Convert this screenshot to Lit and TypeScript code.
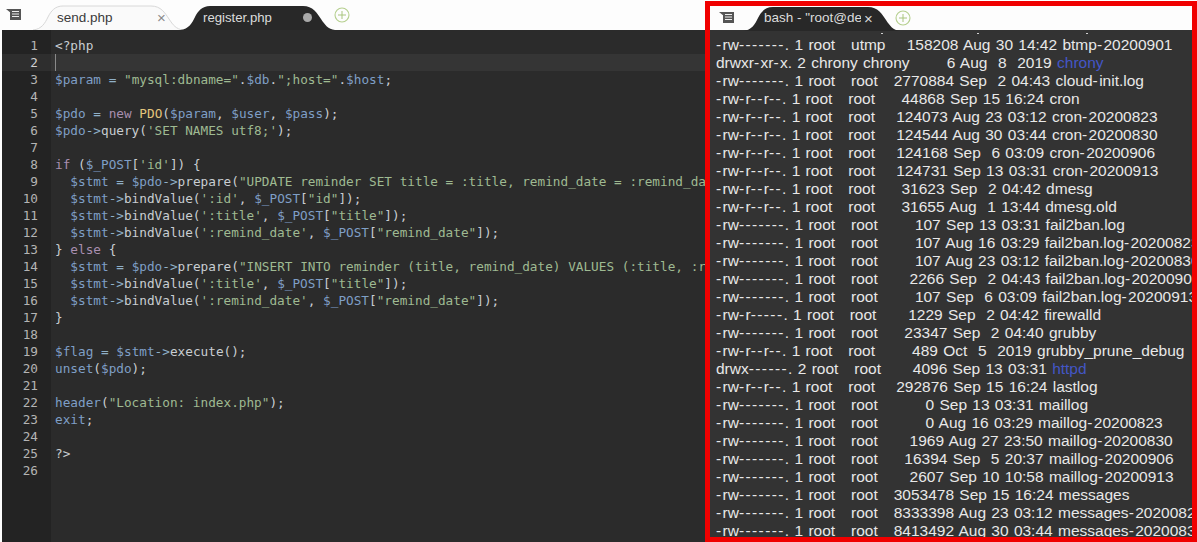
import { LitElement, html, css, svg } from "lit";
import { customElement } from "lit/decorators.js";

const CODE = [
  `<?php`,
  ``,
  `$param = "mysql:dbname=".$db.";host=".$host;`,
  ``,
  `$pdo = new PDO($param, $user, $pass);`,
  `$pdo->query('SET NAMES utf8;');`,
  ``,
  `if ($_POST['id']) {`,
  `  $stmt = $pdo->prepare("UPDATE reminder SET title = :title, remind_date = :remind_date WHERE id = :id");`,
  `  $stmt->bindValue(':id', $_POST["id"]);`,
  `  $stmt->bindValue(':title', $_POST["title"]);`,
  `  $stmt->bindValue(':remind_date', $_POST["remind_date"]);`,
  `} else {`,
  `  $stmt = $pdo->prepare("INSERT INTO reminder (title, remind_date) VALUES (:title, :remind_date)");`,
  `  $stmt->bindValue(':title', $_POST["title"]);`,
  `  $stmt->bindValue(':remind_date', $_POST["remind_date"]);`,
  `}`,
  ``,
  `$flag = $stmt->execute();`,
  `unset($pdo);`,
  ``,
  `header("Location: index.php");`,
  `exit;`,
  ``,
  `?>`,
  ``,
];

const TOKEN =
  /(\$\w+)|("[^"]*"|'[^']*')|\b(new|if|else)\b|\b(PDO)\b|\b(unset|header|exit)\b|(->|=)/g;

function highlight(line: string) {
  const out: unknown[] = [];
  let last = 0;
  for (const m of line.matchAll(TOKEN)) {
    const i = m.index ?? 0;
    if (i > last) out.push(line.slice(last, i));
    const cls = m[1] ? "var" : m[2] ? "str" : m[3] ? "kw" : m[4] ? "cls" : m[5] ? "fn" : "op";
    out.push(html`<span class=${cls}>${m[0]}</span>`);
    last = i + m[0].length;
  }
  if (last < line.length) out.push(line.slice(last));
  return out;
}

const TERM: [string, string?][] = [
  [`-rw-------. 1 root   utmp    158208 Aug 30 14:42 btmp-20200901`],
  [`drwxr-xr-x. 2 chrony chrony       6 Aug  8  2019 `, `chrony`],
  [`-rw-------. 1 root   root   2770884 Sep  2 04:43 cloud-init.log`],
  [`-rw-r--r--. 1 root   root     44868 Sep 15 16:24 cron`],
  [`-rw-r--r--. 1 root   root    124073 Aug 23 03:12 cron-20200823`],
  [`-rw-r--r--. 1 root   root    124544 Aug 30 03:44 cron-20200830`],
  [`-rw-r--r--. 1 root   root    124168 Sep  6 03:09 cron-20200906`],
  [`-rw-r--r--. 1 root   root    124731 Sep 13 03:31 cron-20200913`],
  [`-rw-r--r--. 1 root   root     31623 Sep  2 04:42 dmesg`],
  [`-rw-r--r--. 1 root   root     31655 Aug  1 13:44 dmesg.old`],
  [`-rw-------. 1 root   root       107 Sep 13 03:31 fail2ban.log`],
  [`-rw-------. 1 root   root       107 Aug 16 03:29 fail2ban.log-20200823`],
  [`-rw-------. 1 root   root       107 Aug 23 03:12 fail2ban.log-20200830`],
  [`-rw-------. 1 root   root      2266 Sep  2 04:43 fail2ban.log-20200906`],
  [`-rw-------. 1 root   root       107 Sep  6 03:09 fail2ban.log-20200913`],
  [`-rw-r-----. 1 root   root      1229 Sep  2 04:42 firewalld`],
  [`-rw-------. 1 root   root     23347 Sep  2 04:40 grubby`],
  [`-rw-r--r--. 1 root   root       489 Oct  5  2019 grubby_prune_debug`],
  [`drwx------. 2 root   root      4096 Sep 13 03:31 `, `httpd`],
  [`-rw-r--r--. 1 root   root    292876 Sep 15 16:24 lastlog`],
  [`-rw-------. 1 root   root         0 Sep 13 03:31 maillog`],
  [`-rw-------. 1 root   root         0 Aug 16 03:29 maillog-20200823`],
  [`-rw-------. 1 root   root      1969 Aug 27 23:50 maillog-20200830`],
  [`-rw-------. 1 root   root     16394 Sep  5 20:37 maillog-20200906`],
  [`-rw-------. 1 root   root      2607 Sep 10 10:58 maillog-20200913`],
  [`-rw-------. 1 root   root   3053478 Sep 15 16:24 messages`],
  [`-rw-------. 1 root   root   8333398 Aug 23 03:12 messages-20200823`],
  [`-rw-------. 1 root   root   8413492 Aug 30 03:44 messages-20200830`],
];

function termText(t: string) {
  return t.split(/(-+)/).map((p) => (p.startsWith("-") ? html`<span class="hy">${p}</span>` : p));
}

const listIcon = html`<svg class="list" width="16" height="13" viewBox="0 0 16 13">
  <path d="M0 1h15v11H4V4.2L0 1z" fill="#555" />
  <path d="M6 3.5h7M6 6h7M6 8.5h7" stroke="#eee" stroke-width="1" fill="none" />
</svg>`;

const plusIcon = html`<svg class="plus" width="16" height="16" viewBox="0 0 16 16">
  <circle cx="8" cy="8" r="7" fill="none" stroke="#b5cf8e" stroke-width="1.1" />
  <path d="M8 4v8M4 8h8" stroke="#a9c57f" stroke-width="1" />
</svg>`;

function tabShape(w: number, active: boolean) {
  const d = `M0 25 C9 24 12 18 15 12 C18 6 22 1 30 1 L${w - 32} 1 C${w - 22} 1 ${w - 18} 8 ${w - 14} 14 C${w - 10} 20 ${w - 7} 24 ${w} 25`;
  return html`<svg class="shape" width=${w} height="25" viewBox="0 0 ${w} 25">
    ${active
      ? svg`<path d=${d} fill="#282828" />`
      : svg`<path d=${d} fill="#fafafa" stroke="#d8d8d8" stroke-width="1" />`}
  </svg>`;
}

@customElement("app-root")
export class AppRoot extends LitElement {
  static styles = css`
    :host {
      display: grid;
      grid-template-columns: 705px 492px;
      width: 1197px;
      height: 542px;
      overflow: hidden;
      background: #fff;
      font-family: "Liberation Sans", Arial, sans-serif;
    }
    .editor {
      display: flex;
      flex-direction: column;
      height: 542px;
      min-width: 0;
      padding-left: 2px;
      box-sizing: border-box;
      background: #fdfdfd;
    }
    .bar {
      display: flex;
      align-items: flex-end;
      flex: none;
      background: #fdfdfd;
    }
    .editor .bar {
      height: 30px;
      margin-left: -2px;
    }
    .iconbox {
      display: flex;
      align-items: center;
      justify-content: center;
      width: 33px;
      height: 100%;
      flex: none;
    }
    .editor .iconbox {
      padding-right: 6px;
      box-sizing: border-box;
    }
    .list {
      margin-bottom: 2px;
    }
    .tab {
      position: relative;
      display: flex;
      align-items: center;
      height: 25px;
      flex: none;
      box-sizing: border-box;
      font-size: 13.5px;
    }
    .shape {
      position: absolute;
      left: 0;
      top: 0;
    }
    .label,
    .close,
    .dot {
      position: relative;
    }
    .label {
      white-space: pre;
      overflow: hidden;
      line-height: 25px;
    }
    .send {
      width: 150px;
      padding-left: 24px;
      color: #3a3a3a;
    }
    .send .label {
      width: 100px;
    }
    .close {
      font-size: 15px;
      line-height: 25px;
      color: #8a8a8a;
    }
    .reg {
      width: 155px;
      margin-left: -3px;
      padding-left: 23px;
      color: #dcdcdc;
      font-size: 13.2px;
    }
    .reg .label {
      width: 100px;
    }
    .dot {
      width: 9px;
      height: 9px;
      border-radius: 50%;
      background: #a9a9a9;
    }
    .plus {
      flex: none;
      align-self: center;
      margin-left: -1px;
    }
    .code {
      flex: 1;
      min-height: 0;
      display: flex;
      flex-direction: column;
      padding: 7px 0 0;
      overflow: hidden;
      background: linear-gradient(to right, #232323 49px, #2b2b2b 49px);
      font-family: "DejaVu Sans Mono", "Liberation Mono", monospace;
      font-size: 12.72px;
      color: #c9ced2;
    }
    .row {
      display: flex;
      flex: none;
      height: 17px;
      line-height: 17px;
      white-space: pre;
    }
    .num {
      width: 36px;
      flex: none;
      text-align: right;
      color: #b4b4b4;
    }
    .txt {
      margin-left: 17px;
    }
    .row.cur {
      background: linear-gradient(to right, #2e2e2e 49px, #353535 49px);
    }
    .row.cur .num {
      color: #d0d0d0;
    }
    .row.cur .txt {
      border-left: 1px solid #8a8a8a;
    }
    .var,
    .fn {
      color: #7f9fc6;
    }
    .str {
      color: #9fba92;
    }
    .kw {
      color: #a98fb0;
    }
    .cls {
      color: #e3c57c;
    }
    .op {
      color: #8fb0c8;
    }

    .pane {
      display: flex;
      flex-direction: column;
      margin-top: 1px;
      height: 541px;
      box-sizing: border-box;
      border: 5px solid #f00000;
      background: #333;
      min-width: 0;
    }
    .pane .bar {
      height: 24px;
    }
    .bash {
      width: 157px;
      height: 24px;
      padding-left: 21px;
      color: #dcdcdc;
      font-size: 13.5px;
    }
    .bash .label {
      width: 97px;
      line-height: 24px;
    }
    .bash .close {
      color: #d8d8d8;
      margin-left: 3px;
    }
    .pane .plus {
      margin-left: -5px;
    }
    .term {
      position: relative;
      flex: 1;
      min-height: 0;
      overflow: hidden;
      padding: 6px 0 0 6px;
      display: flex;
      flex-direction: column;
      font-family: "Liberation Sans", Arial, sans-serif;
      font-size: 15.5px;
      color: #e8e8e8;
    }
    .line {
      flex: none;
      height: 18px;
      line-height: 18px;
      white-space: pre;
      word-spacing: 1px;
    }
    .hy {
      letter-spacing: 1.4px;
    }
    .dir {
      color: #4356c6;
    }
    .tick {
      position: absolute;
      top: 3px;
      width: 2px;
      height: 1px;
      background: #cfcfcf;
    }
  `;

  render() {
    return html`
      <section class="editor">
        <div class="bar">
          <div class="iconbox">${listIcon}</div>
          <div class="tab send">
            ${tabShape(150, false)}
            <span class="label">send.php</span>
            <span class="close">×</span>
          </div>
          <div class="tab reg">
            ${tabShape(155, true)}
            <span class="label">register.php</span>
            <span class="dot"></span>
          </div>
          ${plusIcon}
        </div>
        <div class="code">
          ${CODE.map(
            (l, i) => html`<div class="row ${i === 1 ? "cur" : ""}">
              <span class="num">${i + 1}</span><span class="txt">${highlight(l)}</span>
            </div>`,
          )}
        </div>
      </section>
      <section class="pane">
        <div class="bar">
          <div class="iconbox">${listIcon}</div>
          <div class="tab bash">
            ${tabShape(157, true)}
            <span class="label">bash - "root@dev</span>
            <span class="close">×</span>
          </div>
          ${plusIcon}
        </div>
        <div class="term">
          <i class="tick" style="left:171px"></i>
          <i class="tick" style="left:267px"></i>
          <i class="tick" style="left:376px"></i>
          ${TERM.map(
            ([t, d]) => html`<div class="line">${termText(t)}${d ? html`<span class="dir">${d}</span>` : ""}</div>`,
          )}
        </div>
      </section>
    `;
  }
}
